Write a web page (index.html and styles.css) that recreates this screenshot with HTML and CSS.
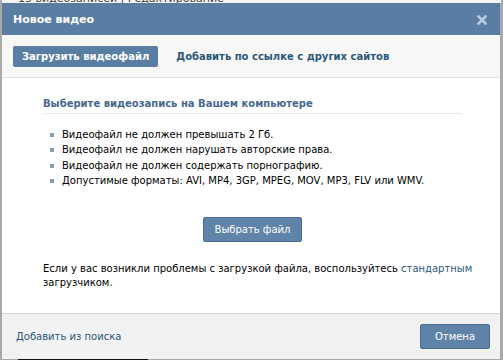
FILE: index.html
```html
<!DOCTYPE html>
<html>
<head>
<meta charset="utf-8">
<title>Новое видео</title>
<link rel="stylesheet" href="styles.css">
</head>
<body>
<div class="page-strip"><span>15 видеозаписей | Редактирование</span></div>
<section class="box">
  <div class="box-title">
    <h1>Новое видео</h1>
    <span class="box-close" title="Закрыть">
      <svg width="10" height="10" viewBox="0 0 10 10"><path d="M1.5 1.5 L8.5 8.5 M8.5 1.5 L1.5 8.5" stroke="#b9cde3" stroke-width="2.6" stroke-linecap="square"/></svg>
    </span>
  </div>
  <div class="box-tabs">
    <span class="tab active">Загрузить видеофайл</span>
    <span class="tab">Добавить по ссылке с других сайтов</span>
  </div>
  <div class="box-body">
    <h2>Выберите видеозапись на Вашем компьютере</h2>
    <ul class="rules">
      <li>Видеофайл не должен превышать 2 Гб.</li>
      <li>Видеофайл не должен нарушать авторские права.</li>
      <li>Видеофайл не должен содержать порнографию.</li>
      <li>Допустимые форматы: AVI, MP4, 3GP, MPEG, MOV, MP3, FLV или WMV.</li>
    </ul>
    <div class="choose">
      <button class="btn">Выбрать файл</button>
    </div>
    <p class="help">Если у вас возникли проблемы с загрузкой файла, воспользуйтесь <a href="#">стандартным</a> загрузчиком.</p>
  </div>
  <div class="box-footer">
    <a href="#">Добавить из поиска</a>
    <button class="btn">Отмена</button>
  </div>
</section>
<div class="page-bottom"><span></span></div>
</body>
</html>
```

FILE: styles.css
```css
body {
  margin: 0;
  background: #a9a9a9;
  font-family: "DejaVu Sans", sans-serif;
  font-size: 10px;
  color: #000;
  height: 360px;
  overflow: hidden;
}

.page-strip {
  height: 3px;
  overflow: hidden;
  background: #f4f4f4;
  margin: 0 2px;
}

.page-strip span {
  display: block;
  margin-top: -8px;
  margin-left: 16px;
  font-size: 11px;
  color: #444;
}

.box {
  margin: 0 3px 0 2px;
  background: #fff;
}

.box-title {
  height: 32px;
  background: #597da3;
  display: flex;
  align-items: center;
  justify-content: space-between;
  padding: 1px 13px 0 11px;
  box-sizing: border-box;
}

.box-title h1 {
  margin: 0;
  color: #fff;
  font-size: 11px;
  font-weight: bold;
}

.box-close {
  display: flex;
}

.box-tabs {
  height: 41px;
  background: #f7f7f7;
  border-bottom: 1px solid #dfe3e8;
  display: flex;
  align-items: center;
  gap: 12px;
  padding: 1px 11px 0;
  box-sizing: content-box;
}

.tab {
  font-weight: bold;
  color: #2b587a;
  padding: 5px 9px 5px;
  border-radius: 2px;
}

.tab.active {
  background: #597da3;
  color: #fff;
}

.tab + .tab {
  padding-left: 6px;
}

.box-body {
  padding: 20px 38px 23px 41px;
}

.box-body h2 {
  margin: 0;
  font-size: 10px;
  color: #45688e;
  font-weight: bold;
  padding: 0 0 4px 0;
  border-bottom: 1px solid #e7eaed;
}

.rules {
  margin: 13px 0 0;
  padding: 0 0 0 19px;
  list-style: none;
}

.rules li {
  line-height: 15.4px;
  position: relative;
}

.rules li::before {
  content: "";
  position: absolute;
  left: -12px;
  top: 6px;
  width: 4px;
  height: 4px;
  background: #8a9bab;
}

.choose {
  display: flex;
  justify-content: center;
  margin-top: 28px;
}

.btn {
  font-family: inherit;
  font-size: 10px;
  color: #fff;
  background: #6083a9;
  border: 1px solid #4a6d93;
  border-radius: 2px;
  padding: 0 11px;
  height: 25px;
  cursor: pointer;
}

.help {
  margin: 20px -14px 0 0;
  line-height: 14px;
}

.help a {
  color: #2b587a;
  text-decoration: none;
}

.box-footer {
  height: 45px;
  background: #f2f2f2;
  border-top: 1px solid #d7d7d7;
  display: flex;
  align-items: center;
  justify-content: space-between;
  padding: 0 10px 0 14px;
}

.box-footer a {
  color: #2b587a;
  text-decoration: none;
}

.box-footer .btn {
  width: 70px;
}

.page-bottom {
  height: 3px;
  padding-left: 18px;
}

.page-bottom span {
  display: block;
  width: 130px;
  height: 3px;
  background: #111;
}
```
